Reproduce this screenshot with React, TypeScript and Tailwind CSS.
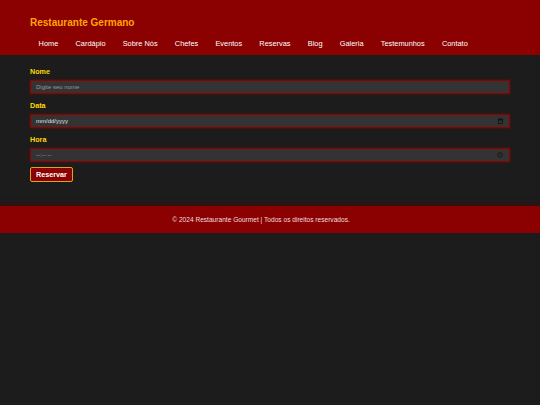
import React from "react";

const navItems = [
  "Home",
  "Cardápio",
  "Sobre Nós",
  "Chefes",
  "Eventos",
  "Reservas",
  "Blog",
  "Galeria",
  "Testemunhos",
  "Contato",
];

const inputCls =
  "block h-[14px] w-full bg-[#333333] border border-[#8b0000] rounded-[1px] px-[5px] text-[6px] shadow-[0_0_3px_rgba(139,0,0,0.8)] outline-none";

export default function App() {
  return (
    <div className="min-h-screen bg-[#1c1c1c] font-['Liberation_Sans',Arial,sans-serif]">
      <header className="bg-[#8b0000] px-[30px] pt-[17px] pb-[6px]">
        <h1 className="text-[10px] leading-[12px] font-bold text-[#ffa500]">
          Restaurante Germano
        </h1>
        <nav className="mt-[10px]">
          <ul className="flex">
            {navItems.map((item) => (
              <li key={item} className="px-[8.6px] text-[7.4px] leading-[10px] text-white">
                {item}
              </li>
            ))}
          </ul>
        </nav>
      </header>

      <main className="px-[30px] pt-[13px] pb-[24px]">
        <form className="flex flex-col">
          <label className="block text-[7.2px] leading-[8px] font-bold text-[#ffd700] mb-[4px]">
            Nome
          </label>
          <input
            type="text"
            placeholder="Digite seu nome"
            className={`${inputCls} text-[#dddddd] placeholder:text-[#999999]`}
          />
          <label className="block mt-[8px] text-[7.2px] leading-[8px] font-bold text-[#ffd700] mb-[4px]">
            Data
          </label>
          <div className="relative">
            <input
              type="text"
              readOnly
              placeholder="mm/dd/yyyy"
              className={`${inputCls} placeholder:text-[#e0e0e0]`}
            />
            <svg
              className="absolute right-[7px] top-[4px] w-[5px] h-[6px]"
              viewBox="0 0 10 12"
              fill="none"
            >
              <rect x="1" y="2" width="8" height="9" stroke="#111" strokeWidth="1.6" />
              <rect x="1" y="2" width="8" height="3" fill="#111" />
            </svg>
          </div>
          <label className="block mt-[8px] text-[7.2px] leading-[8px] font-bold text-[#ffd700] mb-[4px]">
            Hora
          </label>
          <div className="relative">
            <input
              type="text"
              readOnly
              placeholder="--:-- --"
              className={`${inputCls} placeholder:text-[#aaaaaa]`}
            />
            <svg
              className="absolute right-[7px] top-[4px] w-[6px] h-[6px]"
              viewBox="0 0 12 12"
              fill="none"
            >
              <circle cx="6" cy="6" r="4.8" stroke="#111" strokeWidth="1.4" />
              <path d="M6 3.5V6.2H8" stroke="#111" strokeWidth="1.2" />
            </svg>
          </div>
          <div className="mt-[5px] flex">
            <button
              type="button"
              className="block h-[15px] w-[43px] bg-[#8b0000] border border-[#daa520] rounded-[2px] text-[7.2px] leading-[13px] font-bold text-white"
            >
              Reservar
            </button>
          </div>
        </form>
      </main>

      <footer className="h-[27px] bg-[#8b0000] flex items-center justify-center pr-[18px] shadow-[0_-2px_4px_rgba(80,0,0,0.6)]">
        <p className="text-[6.6px] leading-[10px] text-[#f0dede]">
          © 2024 Restaurante Gourmet | Todos os direitos reservados.
        </p>
      </footer>
    </div>
  );
}
